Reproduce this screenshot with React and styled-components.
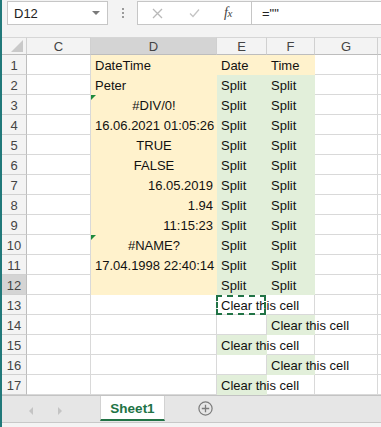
import React from 'react';
import styled, { createGlobalStyle, css } from 'styled-components';

const GlobalStyle = createGlobalStyle`
  html, body { margin: 0; padding: 0; background: #ffffff; }
  body { font-family: "Liberation Sans", Arial, sans-serif; }
`;

const colors = {
  strip: '#21797a',
  chrome: '#f3f3f3',
  border: '#c6c6c6',
  grid: '#d9d9d9',
  headerText: '#444444',
  yellow: '#fff2cc',
  green: '#e2efda',
  excel: '#217346',
};

const Window = styled.div`
  display: flex;
  width: 381px;
  height: 427px;
  overflow: hidden;
`;

const Strip = styled.div`
  width: 2px;
  flex: none;
  background: ${colors.strip};
`;

const Main = styled.div`
  flex: 1;
  display: flex;
  flex-direction: column;
  min-width: 0;
`;

const Toolbar = styled.div`
  height: 37px;
  box-sizing: border-box;
  display: flex;
  align-items: flex-start;
  padding: 1px 0 0 5px;
  background: ${colors.chrome};
`;

const Box = styled.div`
  height: 24px;
  box-sizing: border-box;
  background: #ffffff;
  border: 1px solid ${colors.border};
  display: flex;
  align-items: center;
  font-size: 13px;
  color: #222;
`;

const NameBox = styled(Box)`
  width: 101px;
  padding: 0 6px;
  justify-content: space-between;
`;

const DropArrow = styled.span`
  width: 0;
  height: 0;
  border-left: 4px solid transparent;
  border-right: 4px solid transparent;
  border-top: 4px solid #7a7a7a;
  margin-right: 1px;
`;

const Dots = styled.div`
  display: flex;
  flex-direction: column;
  gap: 2px;
  margin: 7px 13px 0 14px;
  span {
    width: 2px;
    height: 2px;
    background: #9a9a9a;
  }
`;

const ActionBox = styled(Box)`
  width: 114px;
  padding-left: 14px;
  gap: 26px;
  border-right: none;
`;

const Fx = styled.span`
  font-family: "Liberation Serif", "Times New Roman", serif;
  font-style: italic;
  font-size: 14px;
  color: #444;
  letter-spacing: -0.5px;
  margin-left: -2px;
  small { font-size: 11px; }
`;

const FormulaBox = styled(Box)`
  flex: 1;
  padding-left: 10px;
  border-right: none;
`;

const Sheet = styled.div`
  display: grid;
  grid-template-columns: 25px 64px 126px 50px 48px 63px 1fr;
  grid-template-rows: 18px;
  grid-auto-rows: 20px;
`;

const HeadCell = styled.div`
  box-sizing: border-box;
  border-right: 1px solid #d0d0d0;
  border-bottom: 1px solid #bdbdbd;
  border-top: 1px solid #d6d6d6;
  background: ${(p) => (p.$active ? '#d4d4d4' : colors.chrome)};
  color: ${colors.headerText};
  font-size: 13px;
  display: flex;
  align-items: center;
  justify-content: center;
`;

const Corner = styled(HeadCell)`
  position: relative;
  &::after {
    content: '';
    position: absolute;
    right: 3px;
    bottom: 2px;
    border-left: 12px solid transparent;
    border-bottom: 12px solid #c9c9c9;
  }
`;

const RowHead = styled.div`
  box-sizing: border-box;
  border-right: 1px solid #bdbdbd;
  border-bottom: 1px solid #d0d0d0;
  background: ${(p) => (p.$active ? '#d4d4d4' : colors.chrome)};
  color: ${colors.headerText};
  font-size: 13px;
  line-height: 16px;
  padding-top: 3px;
  text-align: center;
`;

const Cell = styled.div`
  position: relative;
  box-sizing: border-box;
  border-right: 1px solid ${(p) => (p.$fill || (p.$spill ? 'transparent' : colors.grid))};
  border-bottom: 1px solid ${(p) => p.$fill || colors.grid};
  background: ${(p) => p.$fill || 'transparent'};
  font-size: 13px;
  line-height: 16px;
  padding: 3px 3px 0 4px;
  white-space: nowrap;
  color: #111;
  text-align: ${(p) => p.$align || 'left'};
  z-index: ${(p) => (p.$spill ? 1 : 0)};
`;

const ErrorMark = styled.span`
  position: absolute;
  left: 0;
  top: 0;
  border-top: 5px solid #1e8a3c;
  border-right: 5px solid transparent;
`;

const CopyMarquee = styled.span`
  position: absolute;
  inset: 0 0 -1px -1px;
  border: 2px dashed ${colors.excel};
  pointer-events: none;
`;

const TabBar = styled.div`
  height: 27px;
  box-sizing: border-box;
  background: #e6e6e6;
  border-top: 1px solid #c3c3c3;
  display: flex;
  align-items: flex-start;
`;

const NavArrow = styled.span`
  width: 0;
  height: 0;
  margin-top: 11px;
  border-top: 4px solid transparent;
  border-bottom: 4px solid transparent;
  ${(p) =>
    p.$dir === 'left'
      ? css`border-right: 4px solid #c4c4c4; margin-left: 27px;`
      : css`border-left: 4px solid #c4c4c4; margin-left: 25px;`}
`;

const SheetTab = styled.div`
  margin-left: 38px;
  width: 65px;
  height: 25px;
  box-sizing: border-box;
  background: #ffffff;
  border-bottom: 2px solid ${colors.excel};
  border-left: 1px solid #d2d2d2;
  border-right: 1px solid #d2d2d2;
  color: ${colors.excel};
  font-weight: bold;
  font-size: 13.5px;
  display: flex;
  align-items: center;
  justify-content: center;
  padding-top: 2px;
`;

const AddSheet = styled.svg`
  margin: 5px 0 0 33px;
`;

const StatusEdge = styled.div`
  flex: 1;
  background: #f4f4f4;
  border-top: 1px solid #c8c8c8;
`;

const columns = ['C', 'D', 'E', 'F', 'G'];
const cellKeys = ['C', 'D', 'E', 'F', 'G', 'H'];

const dColumn = [
  ['DateTime', 'left'],
  ['Peter', 'left'],
  ['#DIV/0!', 'center', true],
  ['16.06.2021 01:05:26', 'right'],
  ['TRUE', 'center'],
  ['FALSE', 'center'],
  ['16.05.2019', 'right'],
  ['1.94', 'right'],
  ['11:15:23', 'right'],
  ['#NAME?', 'center', true],
  ['17.04.1998 22:40:14', 'right'],
  ['', 'left'],
];

// rows 13-17: which column holds "Clear this cell"
const clearRows = [
  { col: 'E', fill: null, marquee: true },
  { col: 'F', fill: colors.green },
  { col: 'E', fill: colors.green },
  { col: 'F', fill: colors.green },
  { col: 'E', fill: colors.green },
];

const buildRow = (r) => {
  if (r <= 12) {
    const [text, align, err] = dColumn[r - 1];
    const efFill = r === 1 ? colors.yellow : colors.green;
    return [
      <Cell key="C" />,
      <Cell key="D" $fill={colors.yellow} $align={align}>
        {err && <ErrorMark />}
        {text}
      </Cell>,
      <Cell key="E" $fill={efFill}>{r === 1 ? 'Date' : 'Split'}</Cell>,
      <Cell key="F" $fill={efFill}>{r === 1 ? 'Time' : 'Split'}</Cell>,
      <Cell key="G" />,
      <Cell key="H" />,
    ];
  }
  const spec = clearRows[r - 13];
  return cellKeys.map((c) =>
    c === spec.col ? (
      <Cell key={c} $fill={spec.fill} $spill>
        {spec.marquee && <CopyMarquee />}
        Clear this cell
      </Cell>
    ) : (
      <Cell key={c} />
    )
  );
};

const App = () => {
  const rows = Array.from({ length: 17 }, (_, i) => i + 1);
  return (
    <Window>
      <GlobalStyle />
      <Strip />
      <Main>
        <Toolbar>
          <NameBox>
            D12
            <DropArrow />
          </NameBox>
          <Dots>
            <span />
            <span />
            <span />
          </Dots>
          <ActionBox>
            <svg width="11" height="11" viewBox="0 0 11 11">
              <path d="M1 1 L10 10 M10 1 L1 10" stroke="#b9b9b9" strokeWidth="1.3" fill="none" />
            </svg>
            <svg width="11" height="10" viewBox="0 0 11 10">
              <path d="M1 5.5 L4 8.5 L10 1.5" stroke="#c4c4c4" strokeWidth="1.3" fill="none" />
            </svg>
            <Fx>
              f<small>x</small>
            </Fx>
          </ActionBox>
          <FormulaBox>=""</FormulaBox>
        </Toolbar>

        <Sheet>
          <Corner />
          {columns.map((c) => (
            <HeadCell key={c} $active={c === 'D'}>
              {c}
            </HeadCell>
          ))}
          <HeadCell />
          {rows.map((r) => (
            <React.Fragment key={r}>
              <RowHead $active={r === 12}>{r}</RowHead>
              {buildRow(r)}
            </React.Fragment>
          ))}
        </Sheet>

        <TabBar>
          <NavArrow $dir="left" />
          <NavArrow $dir="right" />
          <SheetTab>Sheet1</SheetTab>
          <AddSheet width="15" height="15" viewBox="0 0 15 15">
            <circle cx="7.5" cy="7.5" r="6.6" stroke="#7b7b7b" strokeWidth="1.2" fill="none" />
            <path d="M7.5 3.8 V11.2 M3.8 7.5 H11.2" stroke="#7b7b7b" strokeWidth="1.3" />
          </AddSheet>
        </TabBar>
        <StatusEdge />
      </Main>
    </Window>
  );
};

export default App;
